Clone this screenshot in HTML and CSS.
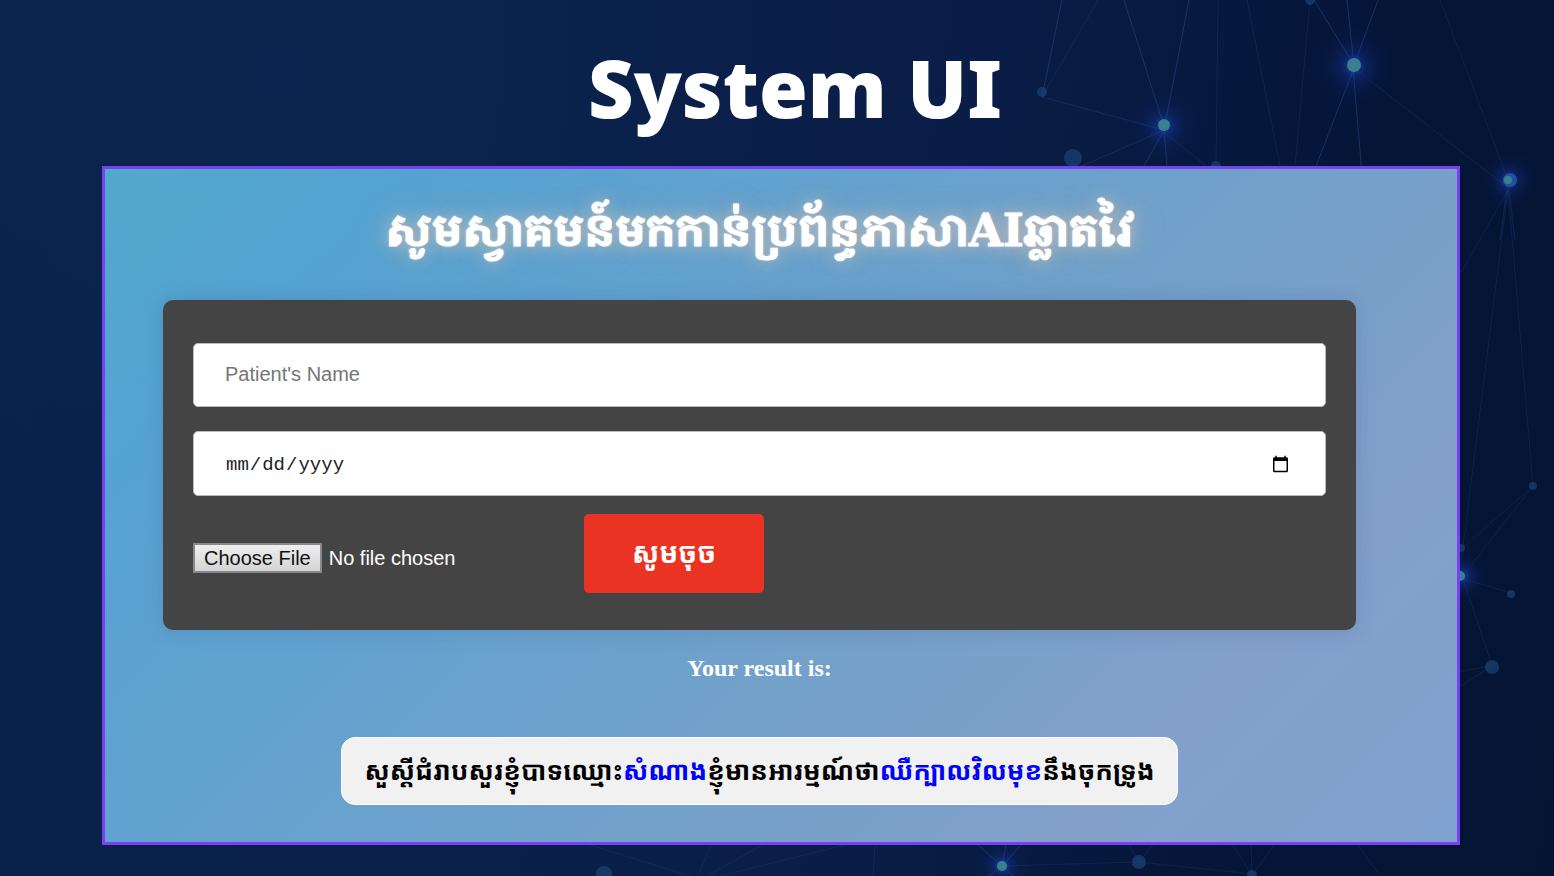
FILE: index.html
```html
<!DOCTYPE html>
<html lang="en-US">
<head>
<meta charset="utf-8">
<meta name="viewport" content="width=device-width, initial-scale=1">
<title>System UI</title>
<link rel="stylesheet" href="styles.css">
</head>
<body class="slide">
<svg class="network" viewBox="0 0 1554 876" preserveAspectRatio="xMidYMid slice" aria-hidden="true">
  <defs>
    <radialGradient id="glow">
      <stop offset="0" stop-color="#2450c8" stop-opacity=".75"/>
      <stop offset=".3" stop-color="#183bb0" stop-opacity=".3"/>
      <stop offset=".6" stop-color="#123090" stop-opacity=".1"/>
      <stop offset="1" stop-color="#0b2880" stop-opacity="0"/>
    </radialGradient>
  </defs>
  <g class="network-lines-faint">
    <path d="M1098 0 1042 97M1218 0 1216 166M1247 0 1280 166M1310 0 1295 166M1440 0 1508 180M1354 68 1508 188M1164 132 1216 174M1508 190 1461 273M1508 190 1461 562M1508 190 1533 486L1461 578M1533 486 1461 549M1461 578 1511 593M1461 573 1492 666L1461 671M1492 666 1461 686M590 845 690 876M711 845 698 876M762 845 707 876M845 845 720 876M875 845 873 876M1002 866 1139 862L1252 874M1129 845 1139 862L1153 845M1233 845 1252 876 1274 845M1251 845 1252 876M1358 845 1380 876"/>
  </g>
  <g class="network-lines">
    <path d="M1062 0 1042 97M1164 126 1124 0M1189 0 1164 130M1164 130 1144 166M1164 130 1167 166M1314 0 1354 65 1347 0M1378 0 1354 65M1354 68 1313 174M1353 68 1362 174M978 845 1002 866 1021 845M1006 845 1002 866 983 880M1002 866 1018 880"/>
    <path d="M1042 97 1164 130 1073 170M1508 182 1500 240M1508 182 1515 240" stroke-opacity=".26"/>
  </g>
  <g fill="url(#glow)">
    <circle cx="1164" cy="126" r="38"/>
    <circle cx="1354" cy="66" r="42"/>
    <circle cx="1509" cy="180" r="32"/>
    <circle cx="1462" cy="576" r="30"/>
    <circle cx="1002" cy="866" r="30"/>
  </g>
  <g class="network-dim">
    <circle cx="1042" cy="92" r="5"/>
    <circle cx="1073" cy="158" r="9"/>
    <circle cx="1216" cy="166" r="5"/>
    <circle cx="1310" cy="0" r="5"/>
    <circle cx="1533" cy="486" r="4"/>
    <circle cx="1511" cy="594" r="4"/>
    <circle cx="1492" cy="667" r="7"/>
    <circle cx="1461" cy="548" r="4"/>
    <circle cx="604" cy="874" r="8"/>
    <circle cx="1139" cy="862" r="7"/>
    <circle cx="1252" cy="875" r="5"/>
  </g>
  <circle cx="1510" cy="180" r="7" fill="#23529c"/>
  <g class="network-bright">
    <circle cx="1164" cy="125" r="6"/>
    <circle cx="1354" cy="65" r="7"/>
    <circle cx="1508" cy="180" r="4"/>
    <circle cx="1460" cy="576" r="5"/>
    <circle cx="1002" cy="866" r="5"/>
  </g>
</svg>
<h1 class="slide-title">System UI</h1>
<main class="frame">
  <h2 class="welcome" lang="km">សូមស្វាគមន៍មកកាន់ប្រព័ន្ធភាសាAIឆ្លាតវៃ</h2>
  <form class="card">
    <input class="field" type="text" placeholder="Patient's Name" aria-label="Patient's Name">
    <input class="field field-date" type="date" aria-label="Date">
    <div class="actions">
      <input class="file" type="file" aria-label="Choose File">
      <button class="submit" type="button" lang="km">សូមចុច</button>
    </div>
  </form>
  <h3 class="result-label">Your result is:</h3>
  <p class="result" lang="km">សួស្តីជំរាបសួរខ្ញុំបាទឈ្មោះ<span class="mark">សំណាង</span>ខ្ញុំមានអារម្មណ៍ថា<span class="mark">ឈឺក្បាលវិលមុខ</span>នឹងចុកទ្រូង</p>
</main>
</body>
</html>
```
FILE: styles.css
```css
* { box-sizing: border-box; }

.slide {
  margin: 0;
  min-height: 100vh;
  padding: 44px 94px 31px 102px;
  position: relative;
  overflow-x: hidden;
  display: flex;
  flex-direction: column;
  background:
    radial-gradient(circle at 18% 8%, rgba(13, 43, 88, .4) 0, rgba(13, 43, 88, 0) 34%),
    linear-gradient(100deg, #09224a 0%, #0a1e48 55%, #051538 82%, #041433 100%);
}

.network {
  position: absolute;
  inset: 0;
  width: 100%;
  height: 100%;
}

.network-lines, .network-lines-faint { fill: none; stroke: #2c62ac; stroke-opacity: .38; }
.network-lines-faint { stroke-opacity: .19; }
.network-dim { fill: #1c477a; fill-opacity: .65; }
.network-bright { fill: #38808f; }

.slide-title {
  position: relative;
  margin: 0 0 34px 28px;
  text-align: center;
  color: #fff;
  font: 900 79px/88px "Noto Sans", "Open Sans", sans-serif;
}

.frame {
  position: relative;
  flex: 1;
  padding: 22px 101px 34px 58px;
  border: 3px solid #7b3ff2;
  display: flex;
  flex-direction: column;
  align-items: center;
  background: linear-gradient(135deg, #51a9cc 0%, #55a3d2 15%, #62a2d0 34%, #70a1ca 55%, #82a0ca 80%, #80a2d0 100%);
}

.welcome {
  margin: 0 0 29px;
  color: #fff;
  font: 700 44px/80px "DejaVu Serif", "Noto Serif Khmer", "Noto Sans Khmer", "Khmer OS", serif;
  -webkit-text-stroke: 1px #fff;
  text-shadow: 0 0 3px rgba(255, 255, 255, .5), 0 0 16px rgba(255, 205, 170, .6), 0 0 32px rgba(255, 205, 170, .35);
}

.card {
  width: 100%;
  padding: 43px 30px 37px;
  border-radius: 10px;
  background: #444;
  box-shadow: 0 0 20px rgba(60, 80, 130, .25);
  display: flex;
  flex-direction: column;
}

.field {
  width: 100%;
  height: 64px;
  margin-bottom: 24px;
  padding: 0 32px 2px 31px;
  border: 1px solid #bbb;
  border-radius: 5px;
  background: #fff;
  color: #222;
  font: 20px/24px "Liberation Sans", Arial, sans-serif;
}

.field::placeholder { color: #757575; }
.field-date { height: 65px; margin-bottom: 18px; padding: 2px 33px 0 31px; font: 19px/24px "Liberation Mono", monospace; }

.actions { display: flex; align-items: center; gap: 31px; }

.file {
  width: 360px;
  margin-top: 8px;
  color: #fff;
  font: 20px/24px "Liberation Sans", Arial, sans-serif;
}

.file::file-selector-button {
  height: 30px;
  margin: 0 7px 0 0;
  padding: 0 9px;
  border: 2px solid #888;
  border-radius: 0;
  background: linear-gradient(#eee, #d4d4d4);
  color: #111;
  font: 20px/24px "Liberation Sans", Arial, sans-serif;
}

.submit {
  padding: 20px 48px;
  border: 0;
  border-radius: 5px;
  background: #eb3324;
  color: #fff;
  font: 700 28px/39px "Liberation Sans", "Noto Sans Khmer", "Khmer OS", sans-serif;
}

.result-label {
  margin: 24px 0 55px;
  color: #fff;
  font: 700 24px/28px "Liberation Serif", serif;
}

.result {
  margin: 0;
  padding: 14px 22px;
  border: 1px solid #fff;
  border-radius: 14px;
  background: #f1f1f1;
  color: #000;
  font: 700 26px/38px "Liberation Sans", "Noto Sans Khmer", "Khmer OS", sans-serif;
}

.mark { color: #00f; }
```
